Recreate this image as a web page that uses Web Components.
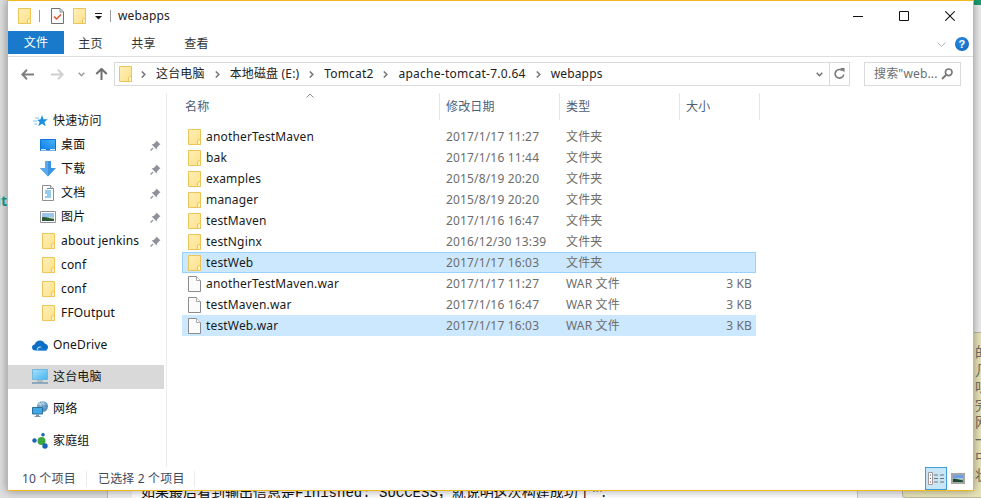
<!DOCTYPE html>
<html lang="zh-CN">
<head>
<meta charset="utf-8">
<title>webapps</title>
<style>
html,body{margin:0;height:100%;overflow:hidden}
body{font:12px/16px "Noto Sans","Noto Sans CJK SC",sans-serif;color:#1a1a1a}
</style>
</head>
<body>
<x-desktop>
  <x-window>
    <x-titlebar slot="" label="webapps"></x-titlebar>
    <x-ribbon></x-ribbon>
    <x-addressbar></x-addressbar>
    <x-body>
      <x-navpane slot="nav">
        <x-nav-item icon="star" label="快速访问"></x-nav-item>
        <x-nav-item sub icon="desktop" label="桌面" pin></x-nav-item>
        <x-nav-item sub icon="download" label="下载" pin></x-nav-item>
        <x-nav-item sub icon="doc" label="文档" pin></x-nav-item>
        <x-nav-item sub icon="picture" label="图片" pin></x-nav-item>
        <x-nav-item sub icon="folder" label="about jenkins" pin></x-nav-item>
        <x-nav-item sub icon="folder" label="conf"></x-nav-item>
        <x-nav-item sub icon="folder" label="conf"></x-nav-item>
        <x-nav-item sub icon="folder" label="FFOutput"></x-nav-item>
        <x-nav-item gap icon="cloud" label="OneDrive"></x-nav-item>
        <x-nav-item gap active icon="pc" label="这台电脑"></x-nav-item>
        <x-nav-item gap icon="network" label="网络"></x-nav-item>
        <x-nav-item gap icon="homegroup" label="家庭组"></x-nav-item>
      </x-navpane>
      <x-filelist slot="list">
        <x-file-row icon="folder" name="anotherTestMaven" date="2017/1/17 11:27" type="文件夹"></x-file-row>
        <x-file-row icon="folder" name="bak" date="2017/1/16 11:44" type="文件夹"></x-file-row>
        <x-file-row icon="folder" name="examples" date="2015/8/19 20:20" type="文件夹"></x-file-row>
        <x-file-row icon="folder" name="manager" date="2015/8/19 20:20" type="文件夹"></x-file-row>
        <x-file-row icon="folder" name="testMaven" date="2017/1/16 16:47" type="文件夹"></x-file-row>
        <x-file-row icon="folder" name="testNginx" date="2016/12/30 13:39" type="文件夹"></x-file-row>
        <x-file-row icon="folder" name="testWeb" date="2017/1/17 16:03" type="文件夹" focus></x-file-row>
        <x-file-row icon="file" name="anotherTestMaven.war" date="2017/1/17 11:27" type="WAR 文件" size="3 KB"></x-file-row>
        <x-file-row icon="file" name="testMaven.war" date="2017/1/16 16:47" type="WAR 文件" size="3 KB"></x-file-row>
        <x-file-row icon="file" name="testWeb.war" date="2017/1/17 16:03" type="WAR 文件" size="3 KB" selected></x-file-row>
      </x-filelist>
    </x-body>
    <x-statusbar></x-statusbar>
  </x-window>
</x-desktop>
<script>
const FOLDER_DEFS = '<defs><linearGradient id="fg" x1="0" y1="0" x2="1" y2="1"><stop offset="0" stop-color="#fff0b8"/><stop offset="1" stop-color="#fde08a"/></linearGradient></defs>';
const ICONS = {
  folder:[13,16,FOLDER_DEFS+'<path d="M.5.5h12v15H.5z" fill="url(#fg)" stroke="#ebc557"/><path d="M9.5 15.5v-4l3-1.500v5.500z" fill="#fff3c4" stroke="#ebc557"/>'],
  file:[13,16,'<path d="M.5.5h8l4 4v11H.5z" fill="#fbfbfb" stroke="#8c8c8c"/><path d="M8.500.5v4h4" fill="#fff" stroke="#a8a8a8"/>'],
  task:[13,16,'<path d="M.5.5h8.500l3.500 3.500v11.500H.5z" fill="#fbfbfb" stroke="#707070"/><path d="M9 .5v3.500h3.500" fill="none" stroke="#909090"/><path d="M3 8.500l2.500 2.500L10 6.500" fill="none" stroke="#e2552b" stroke-width="1.500"/>'],
  star:[16,16,'<path d="M10 2l1.500 4.200 4.300.1-3.400 2.700 1.300 4.300L10 10.800l-3.700 2.500 1.300-4.300L5.200 7l3.300-.8z" fill="#1c8fe0"/><path d="M3 5h4M1 8h4M2 11h3" stroke="#7cc2ee" stroke-width="1"/>'],
  desktop:[16,16,'<defs><linearGradient id="dg" x1="0" y1="1" x2="1" y2="0"><stop offset="0" stop-color="#0a7ae8"/><stop offset="1" stop-color="#48b4fb"/></linearGradient></defs><path d="M.5 2.500h15v11H.5z" fill="url(#dg)" stroke="#0d73d4"/><path d="M1 12h14v1.500H1z" fill="#d9eefc"/><path d="M6 12h4v1H6z" fill="#0d73d4"/>'],
  download:[16,16,'<path d="M5 0h6v7h5l-8 8.500L0 7h5z" fill="#3b93e2"/><path d="M5 0h3v15.500L0 7h5z" fill="#5aa9ec"/>'],
  doc:[16,16,'<path d="M2.500.5h8l3 3v12h-11z" fill="#fff" stroke="#8f8f8f"/><path d="M10.500.5v3h3" fill="#e8e8e8" stroke="#8f8f8f"/><path d="M7 3.500h3M5 6h6M5 8h6M7 10h4M5 12h6" stroke="#2d97dc"/>'],
  picture:[16,16,'<path d="M.5 2.500h15v11H.5z" fill="#fff" stroke="#929292"/><path d="M2 4h12v4H2z" fill="#9cc5ee"/><path d="M2 8h12v2.500H2z" fill="#b8d3c0"/><path d="M2 8.500c3-1.500 6 1 12 1.500v2H2z" fill="#2f5a3a"/>'],
  cloud:[16,11,'<path d="M3.500 10.500C1.500 10.500 0 9.200 0 7.500c0-1.500 1.100-2.700 2.700-2.900C3.500 2 5.600.5 8 .5c2.100 0 3.900 1.100 4.700 2.900 1.900.3 3.300 1.600 3.300 3.500 0 2-1.500 3.600-3.500 3.600z" fill="#0c6fc5"/><path d="M5 10.500c-.6-2.200 1.300-4.300 3.800-4l3.700 4z" fill="#fff" opacity=".85"/><path d="M5.500 10.500c0-1.800 1.400-3.200 3.300-3.200 1.100 0 2 .4 2.700 1.200 1.700-.3 3 .6 3.500 2z" fill="#1177cf"/>'],
  pc:[16,16,'<defs><linearGradient id="pg" x1="0" y1="0" x2="1" y2="1"><stop offset="0" stop-color="#a9e1fb"/><stop offset="1" stop-color="#45b4ef"/></linearGradient></defs><path d="M.5 .5h15v10H.5z" fill="url(#pg)" stroke="#6fb7dd"/><path d="M5 11h6v2H5z" fill="#a7bfcd"/><path d="M0 13h16v2H0z" fill="#8fa9bc"/>'],
  network:[16,16,'<defs><radialGradient id="ng" cx=".4" cy=".3"><stop offset="0" stop-color="#d8ecf8"/><stop offset="1" stop-color="#5a94bd"/></radialGradient></defs><circle cx="10.500" cy="5.500" r="5.500" fill="url(#ng)"/><path d="M8 1c3 2 4 6 2 10M5.500 5h10" stroke="#3f7ba8" fill="none" opacity=".6"/><path d="M.5 6.500h10v6.500H.5z" fill="#41a9e6" stroke="#2c6f9e"/><path d="M4 13.500h3v1.500H4zM2.500 15h6v1h-6z" fill="#7c95a8"/>'],
  homegroup:[16,16,'<circle cx="9.500" cy="8" r="4" fill="#3ea83f"/><circle cx="2.500" cy="7.500" r="2.200" fill="#1b63b3"/><circle cx="11" cy="1.800" r="1.800" fill="#1b63b3"/><circle cx="13" cy="13" r="2.700" fill="#1b63b3"/>'],
  pin:[11,11,'<path d="M6.500 .5l4 4-1.200 .6-2.300 2.300-.3 2.100L1.600 4.400l2.100-.3L6 1.800z" fill="#8d9299"/><path d="M3 8L.5 10.500" stroke="#8d9299" stroke-width="1.300"/>'],
  back:[13,11,'<path d="M6 .8L1.300 5.500 6 10.200M1.500 5.500H13" fill="none" stroke="currentColor" stroke-width="2"/>'],
  forward:[13,11,'<path d="M7 .8l4.700 4.700L7 10.200M11.500 5.500H0" fill="none" stroke="currentColor" stroke-width="2"/>'],
  up:[13,12,'<path d="M1.300 6L6.500 .9 11.700 6M6.500 1.500V12" fill="none" stroke="currentColor" stroke-width="2"/>'],
  chevdown:[7,5,'<path d="M.7 .8L3.500 3.700 6.300 .8" fill="none" stroke="currentColor" stroke-width="1.400"/>'],
  chevright:[5,7,'<path d="M.8 .5L3.800 3.500 .8 6.500" fill="none" stroke="currentColor" stroke-width="1.600"/>'],
  chevup:[8,5,'<path d="M.5 4.500L4 1l3.500 3.500" fill="none" stroke="currentColor"/>'],
  chevwide:[9,5,'<path d="M.5 .5l4 4 4-4" fill="none" stroke="currentColor"/>'],
  refresh:[11,12,'<path d="M8.500 2.800A4.300 4.300 0 1 0 9.700 6.500" fill="none" stroke="currentColor" stroke-width="1.600"/><path d="M6 0h4.500v4.500z" fill="currentColor"/>'],
  search:[12,12,'<circle cx="7.700" cy="4.300" r="3.300" fill="none" stroke="currentColor" stroke-width="1.700"/><path d="M5.200 6.800L1 11" stroke="currentColor" stroke-width="2"/>'],
  qadrop:[7,7,'<path d="M0 0h7v1H0zM0 3h7L3.500 6.500z" fill="#1a1a1a"/>'],
  min:[10,1,'<path d="M0 0h10v1H0z" fill="#111"/>'],
  max:[10,10,'<path d="M.5 .5h9v9h-9z" fill="none" stroke="#111"/>'],
  close:[10,10,'<path d="M.3 .3l9.400 9.400M9.700 .3L.3 9.700" stroke="#111" stroke-width="1.050"/>'],
  details:[16,13,'<path d="M.5 .5h4v12h-4z" fill="#fff" stroke="#9a9a9a"/><path d="M2 2.500h1v1H2zM2 6h1v1H2z" fill="#555"/><path d="M2 9.500h1v1H2z" fill="#c22"/><path d="M6 2.500h4v1H6zM12 2.500h4v1h-4zM6 6h4v1H6zM12 6h4v1h-4zM6 9.500h4v1H6zM12 9.500h4v1h-4z" fill="#777"/>'],
  large:[14,11,'<path d="M1 1h12v9H1z" fill="#fff" stroke="#a6a6a6" stroke-width="2"/><path d="M2 2h10v3.500H2z" fill="#6c9fe8"/><path d="M2 5.500h10V9H2z" fill="#9fc0b0"/><path d="M2 6c3-1 6 1 10 1.500V9H2z" fill="#1f4a33"/>']
};
function svg(name){
  const [w,h,body]=ICONS[name];
  return `<svg xmlns="http://www.w3.org/2000/svg" width="${w}" height="${h}" viewBox="0 0 ${w} ${h}" style="display:block;flex:none">${body}</svg>`;
}
class Base extends HTMLElement{
  constructor(){super();this.attachShadow({mode:'open'});}
  render(html){this.shadowRoot.innerHTML=html;}
}
class XDesktop extends Base{connectedCallback(){this.render(`<style>
:host{display:block;position:relative;width:981px;height:498px;overflow:hidden;background:#dfdfdf}
.left{position:absolute;left:0;top:192px;font:bold 14px/18px "Noto Sans",sans-serif;color:#16a085;width:7px;overflow:hidden;direction:rtl}
.green{position:absolute;left:974px;top:0;width:7px;height:5px;background:#1a9a6e}
.right{position:absolute;left:974px;top:5px;width:7px;height:340px;background:#ececec}
.b1{position:absolute;left:107px;top:480px;width:795px;height:18px;background:#f0f0f0;border-left:1px solid #b8b8b8;box-sizing:border-box}
.b2{position:absolute;left:132px;top:480px;width:725px;height:18px;background:#fff;border-right:1px solid #c8c8c8}
.txt{position:absolute;left:141px;top:482px;font:14px/18px "Noto Sans CJK SC",sans-serif;color:#111;white-space:nowrap}
.txt b{font:14px/18px "Liberation Mono",monospace}
.card{position:absolute;left:902px;top:332px;width:100px;height:164px;background:#e9e5b9;border:1px solid #bdbaa2;border-radius:4px;box-sizing:content-box}
.lines{position:absolute;left:72px;top:10px;font:14px/17.500px "Noto Sans CJK SC",sans-serif;color:#6f6f62;white-space:pre}
</style>
<div class="left">it</div><div class="green"></div><div class="right"></div>
<div class="b1"></div><div class="b2"></div>
<div class="txt">如果最后看到输出信息是<b>Finished: SUCCESS</b>，就说明这次构建成功了™:</div>
<div class="card"><div class="lines">的
几
听
完
网
一
中
状</div></div>
<slot></slot>`);}}
class XWindow extends Base{connectedCallback(){this.render(`<style>
:host{position:absolute;left:7px;top:0;width:967px;height:491px;box-sizing:border-box;display:flex;flex-direction:column;background:#fff;border:1px solid #f2b81f;box-shadow:0 0 9px rgba(0,0,0,.38);letter-spacing:.16px}
</style><slot></slot>`);}}
class XTitlebar extends Base{connectedCallback(){this.render(`<style>
:host{display:flex;align-items:center;height:30px;flex:none;font-size:12px}
.q{display:flex;align-items:center;padding-left:10px}
.sep{width:1px;height:12px;background:#9a9a9a}
.t{margin-left:7px;color:#222}
.ctl{margin-left:auto;display:flex;align-items:center}
.ctl span{width:46px;height:30px;display:flex;align-items:center;justify-content:center}
</style>
<div class="q">${svg('folder')}<div class="sep" style="margin:0 11px 0 8px"></div>${svg('task')}<div style="width:9px"></div>${svg('folder')}<div style="width:9px"></div>${svg('qadrop')}<div class="sep" style="margin-left:8px"></div></div>
<div class="t">${this.getAttribute('label')}</div>
<div class="ctl"><span>${svg('min')}</span><span>${svg('max')}</span><span>${svg('close')}</span></div>`);}}
class XRibbon extends Base{connectedCallback(){this.render(`<style>
:host{display:flex;height:26px;flex:none;box-sizing:border-box;border-bottom:1px solid #dedede;align-items:flex-start;color:#333}
.tab{height:23px;box-sizing:content-box;display:flex;align-items:center;justify-content:center;padding:0 14px;width:25px}
.tab span{position:relative;top:1px}
.file{width:56px;padding:0;background:#1979ca;color:#fff}
.gap{margin-left:auto;display:flex;align-items:center;height:26px;gap:9px;padding-right:4px;color:#b4b4b4}
.help{width:14px;height:14px;border-radius:50%;background:radial-gradient(circle at 40% 35%,#2a8be0,#0f63bb);color:#fff;font:bold 11px/14px "Liberation Sans",sans-serif;text-align:center}
</style>
<div class="tab file">文件</div><div class="tab"><span>主页</span></div><div class="tab"><span>共享</span></div><div class="tab"><span>查看</span></div>
<div class="gap">${svg('chevwide')}<div class="help">?</div></div>`);}}
class XAddressbar extends Base{connectedCallback(){
  const crumbs=['这台电脑','本地磁盘 (E:)','Tomcat2','apache-tomcat-7.0.64','webapps'];
  this.render(`<style>
:host{display:flex;align-items:center;height:36px;flex:none;box-sizing:border-box;padding:0 0 2px 13px}
.nav{display:flex;align-items:center;width:93px;flex:none}
.box{height:24px;box-sizing:border-box;border:1px solid #d9d9d9;display:flex;align-items:center}
.addr{width:736px;padding-left:4px}
.ch{width:25px;display:flex;justify-content:center;color:#7a7a7a;flex:none}
.crumb{white-space:nowrap;color:#222}
.crumb:nth-last-of-type(2){letter-spacing:.26px}
.end{margin-left:auto;display:flex;align-items:center;height:100%}
.drop{width:19px;display:flex;justify-content:center;color:#6d6d6d}
.ref{width:19px;height:100%;border-left:1px solid #d9d9d9;display:flex;align-items:center;justify-content:center;color:#7a7a7a}
.search{width:97px;margin-left:14px;padding-left:9px;color:#6d6d6d;position:relative}
.search span{white-space:nowrap}
.search i{position:absolute;right:7px;top:5px;color:#7a7a7a}
</style>
<div class="nav"><span style="color:#7f7f7f">${svg('back')}</span><span style="color:#cfcfcf;margin-left:17px">${svg('forward')}</span><span style="color:#9a9a9a;margin-left:14px">${svg('chevdown')}</span><span style="color:#6e6e6e;margin-left:10px">${svg('up')}</span></div>
<div class="box addr">${svg('folder')}<div style="width:12px;display:flex;justify-content:flex-end;color:#7a7a7a;flex:none"><span style="margin-right:-2px">${svg('chevright')}</span></div><div style="width:12px"></div>${crumbs.map((c,i)=>(i?`<div class="ch">${svg('chevright')}</div>`:'')+`<span class="crumb">${c}</span>`).join('')}
<div class="end"><div class="drop">${svg('chevdown')}</div><div class="ref">${svg('refresh')}</div></div></div>
<div class="box search"><span>搜索"web...</span><i>${svg('search')}</i></div>`);}}
class XBody extends Base{connectedCallback(){this.render(`<style>
:host{display:flex;flex:1;min-height:0}
</style><slot name="nav"></slot><slot name="list"></slot>`);}}
class XNavpane extends Base{connectedCallback(){this.render(`<style>
:host{display:block;width:159px;flex:none;box-sizing:border-box;border-right:1px solid #ececec;padding-top:16px;padding-right:2px}
</style><slot></slot>`);}}
class XNavItem extends Base{connectedCallback(){
  const sub=this.hasAttribute('sub');
  this.render(`<style>
:host{display:flex;align-items:center;height:24px;box-sizing:border-box;padding-left:${sub?32:24}px;color:#111;white-space:nowrap}
:host([gap]){margin-top:8px}
:host([active]){background:#d9d9d9}
.ic{width:16px;display:flex;justify-content:center;flex:none;margin-right:5px}
.l{flex:1}
.p{margin-right:3px}
</style><div class="ic">${svg(this.getAttribute('icon'))}</div><div class="l">${this.getAttribute('label')}</div>${this.hasAttribute('pin')?`<div class="p">${svg('pin')}</div>`:''}`);}}
class XFilelist extends Base{connectedCallback(){this.render(`<style>
:host{display:block;flex:1;padding-left:15px;position:relative}
.head{display:grid;grid-template-columns:258px 120px 120px 80px;height:27px;margin-bottom:6px;color:#4c607a}
.head div{border-right:1px solid #e5e5e5;display:flex;align-items:center;padding-left:6px;box-sizing:border-box}
.head div:first-child{padding-left:3px}
.caret{position:absolute;left:139px;top:0;color:#8a8a8a}
</style>
<div class="head"><div>名称</div><div>修改日期</div><div>类型</div><div>大小</div></div>
<div class="caret">${svg('chevup')}</div>
<slot></slot>`);}}
class XFileRow extends Base{connectedCallback(){
  const a=n=>this.getAttribute(n)||'';
  this.render(`<style>
:host{display:grid;width:574px;grid-template-columns:258px 120px 120px 76px;height:21px;align-items:center;white-space:nowrap;color:#1a1a1a}
:host([selected]),:host([focus]){background:#cce8ff}
:host([focus]){box-shadow:inset 0 0 0 1px #99d1ff}
.n{display:flex;align-items:center;padding-left:6px;gap:5px}
.d{padding-left:6px;color:#6d6d6d}
.s{text-align:right;padding-right:4px;color:#6d6d6d}
</style><div class="n">${svg(a('icon'))}<span>${a('name')}</span></div><div class="d">${a('date')}</div><div class="d">${a('type')}</div><div class="s">${a('size')}</div>`);}}
class XStatusbar extends Base{connectedCallback(){this.render(`<style>
:host{display:flex;align-items:center;height:23px;flex:none;color:#3f4a5a;margin-top:auto}
.a{padding-left:14px;width:64px;border-right:1px solid #ececec;height:16px}
.b{padding-left:11px;width:96px;border-right:1px solid #ececec;height:16px}
.v{margin-left:auto;display:flex;align-items:center;gap:4px;padding-right:8px}
.on{width:22px;height:23px;box-sizing:border-box;border:1px solid #3c9fd8;background:#c9e6f6;display:flex;align-items:center;justify-content:center}
</style><div class="a">10 个项目</div><div class="b">已选择 2 个项目</div>
<div class="v"><div class="on">${svg('details')}</div>${svg('large')}</div>`);}}
const defs={'x-desktop':XDesktop,'x-window':XWindow,'x-titlebar':XTitlebar,'x-ribbon':XRibbon,'x-addressbar':XAddressbar,'x-body':XBody,'x-navpane':XNavpane,'x-nav-item':XNavItem,'x-filelist':XFilelist,'x-file-row':XFileRow,'x-statusbar':XStatusbar};
for(const k in defs)customElements.define(k,defs[k]);
</script>
</body>
</html>
